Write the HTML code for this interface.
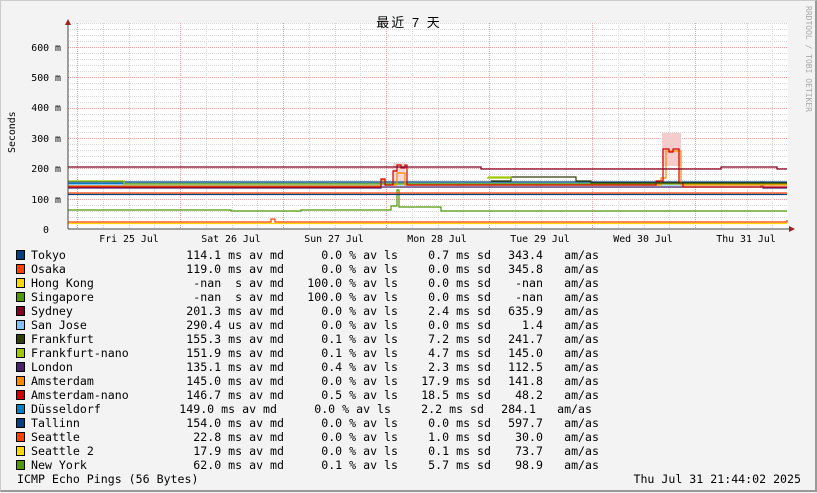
<!DOCTYPE html>
<html><head><meta charset="utf-8"><style>
body{margin:0;width:817px;height:492px;overflow:hidden;background:#f3f3f3}
#w{position:relative;width:817px;height:492px;background:#f3f3f3;box-sizing:border-box;border-top:1px solid #ccc;border-left:1px solid #ccc;border-right:2px solid #999;border-bottom:2px solid #999}
svg{position:absolute;left:0;top:0}
.m{font-family:"DejaVu Sans Mono","Liberation Mono",monospace;font-size:9.9px;fill:#000}
.l{font-family:"DejaVu Sans Mono","Liberation Mono",monospace;font-size:11.6px;fill:#000}
.r{text-anchor:end}
</style></head><body><div id="w">
<svg id="s" width="817" height="492" viewBox="0 0 817 492" xmlns="http://www.w3.org/2000/svg">
<rect x="67" y="22" width="720" height="206" fill="#fff"/>
<g id="grid"></g>
<text x="408" y="26" text-anchor="middle" font-family="'Liberation Sans','Noto Sans CJK SC',sans-serif" font-size="13" letter-spacing="2" fill="#000">最近 7 天</text>
<text transform="translate(805,5) rotate(90)" font-family="'DejaVu Sans Mono',monospace" font-size="8" fill="#aaa">RRDTOOL / TOBI OETIKER</text>
<text transform="translate(14,152) rotate(-90)" class="m" font-size="10.5">Seconds</text>
<text x="60" y="50" class="m r">600 m</text><text x="60" y="80" class="m r">500 m</text><text x="60" y="110" class="m r">400 m</text><text x="60" y="141" class="m r">300 m</text><text x="60" y="171" class="m r">200 m</text><text x="60" y="202" class="m r">100 m</text><text x="48" y="232" class="m r">0</text>
<text x="128" y="241" class="m" text-anchor="middle">Fri 25 Jul</text><text x="230" y="241" class="m" text-anchor="middle">Sat 26 Jul</text><text x="333" y="241" class="m" text-anchor="middle">Sun 27 Jul</text><text x="436" y="241" class="m" text-anchor="middle">Mon 28 Jul</text><text x="539" y="241" class="m" text-anchor="middle">Tue 29 Jul</text><text x="642" y="241" class="m" text-anchor="middle">Wed 30 Jul</text><text x="745" y="241" class="m" text-anchor="middle">Thu 31 Jul</text>
<g fill="none" stroke-width="1.2">
<path d="M392 162 L404 162 L404 180 L392 180 Z" fill="#f4d8d8" stroke="none"/>
<path d="M661 132 L680 132 L680 165 L661 165Z" fill="#f4cccc" stroke="none"/>
<path d="M67 222.5H786" stroke="#ffd700"/>
<path d="M67 221H270V218H274V221H786V219" stroke="#ff4000"/>
<path d="M67 209H230V210H300V209H390V205H396V189H398V206H440V210H786" stroke="#4e9a06"/>
<path d="M67 192H786" stroke="#ff4000"/>
<path d="M67 193.5H786" stroke="#004080"/>
<path d="M67 187H380V186H760V181H762V187H786" stroke="#4a2070"/>
<path d="M67 184H786" stroke="#80c0ff"/>
<path d="M67 181H786" stroke="#004080"/>
<path d="M67 182.5H786" stroke="#0080c0"/>
<path d="M67 180H123V183H786" stroke="#a0c800"/>
<path d="M67 185H380V179H384V184H396V172H404V184H660V177H665V150H680V184H786" stroke="#ff8800"/>
<path d="M67 186H380V178H384V184H392V170H396V164H400V167H404V164H406V184H655V180H662V148H668V151H672V148H678V182H682V186H786" stroke="#cc0000"/>
<path d="M490 180H510V176H575V180H590V182H786" stroke="#2f3f0a"/>
<path d="M487 176H510V177H486" stroke="#a0c800"/>
<path d="M67 166H480V168H720V166H776V168H786" stroke="#7f0020"/>
</g>
<path d="M67 228H790" stroke="#444" stroke-width="1"/>
<path d="M67 228V22" stroke="#444" stroke-width="1"/>
<path d="M64 24L67 18L70 24Z" fill="#a02020"/>
<path d="M788 225L794 228L788 231Z" fill="#a02020"/>
<g id="leg"></g>
<text x="16" y="482" class="l">ICMP Echo Pings (56 Bytes)</text>
<text x="800" y="482" class="l r">Thu Jul 31 21:44:02 2025</text>
</svg></div>
<script>
var NS="http://www.w3.org/2000/svg",g=document.getElementById("grid");
function ln(x1,y1,x2,y2,c){var l=document.createElementNS(NS,"line");l.setAttribute("x1",x1);l.setAttribute("y1",y1);l.setAttribute("x2",x2);l.setAttribute("y2",y2);l.setAttribute("stroke",c);l.setAttribute("stroke-width","1");l.setAttribute("stroke-dasharray","1,1");g.appendChild(l);}
for(var i=1;i<=34;i++){var y=Math.round(228-i*6.066)+0.5;ln(67,y,787,y,i%5==0?"#f0a0a0":"#d8d8d8");}
for(var k=-1;k<30;k++){var x=Math.round(76+k*25.75)+0.5;if(x<68||x>787)continue;ln(x,22,x,228,k%4==0?"#f0a0a0":"#d8d8d8");}
var rows=[["#004080","Tokyo","114.1 ms av md","0.0 % av ls","0.7 ms sd","343.4"],
["#ff4000","Osaka","119.0 ms av md","0.0 % av ls","0.0 ms sd","345.8"],
["#ffd700","Hong Kong","-nan  s av md","100.0 % av ls","0.0 ms sd","-nan"],
["#4e9a06","Singapore","-nan  s av md","100.0 % av ls","0.0 ms sd","-nan"],
["#7f0020","Sydney","201.3 ms av md","0.0 % av ls","2.4 ms sd","635.9"],
["#80c0ff","San Jose","290.4 us av md","0.0 % av ls","0.0 ms sd","1.4"],
["#2f3f0a","Frankfurt","155.3 ms av md","0.1 % av ls","7.2 ms sd","241.7"],
["#a0c800","Frankfurt-nano","151.9 ms av md","0.1 % av ls","4.7 ms sd","145.0"],
["#4a2070","London","135.1 ms av md","0.4 % av ls","2.3 ms sd","112.5"],
["#ff8800","Amsterdam","145.0 ms av md","0.0 % av ls","17.9 ms sd","141.8"],
["#cc0000","Amsterdam-nano","146.7 ms av md","0.5 % av ls","18.5 ms sd","48.2"],
["#0080c0","Düsseldorf","149.0 ms av md","0.0 % av ls","2.2 ms sd","284.1"],
["#004080","Tallinn","154.0 ms av md","0.0 % av ls","0.0 ms sd","597.7"],
["#ff4000","Seattle","22.8 ms av md","0.0 % av ls","1.0 ms sd","30.0"],
["#ffd700","Seattle 2","17.9 ms av md","0.0 % av ls","0.1 ms sd","73.7"],
["#4e9a06","New York","62.0 ms av md","0.1 % av ls","5.7 ms sd","98.9"]];
var L=document.getElementById("leg");
function tx(x,y,s,a){var t=document.createElementNS(NS,"text");t.setAttribute("x",x);t.setAttribute("y",y);t.setAttribute("class","l");t.style.whiteSpace="pre";if(a)t.setAttribute("text-anchor","end");t.textContent=s;L.appendChild(t);}
rows.forEach(function(r,i){var yc=254+i*14,y=yc+4,d=(i==11)?7:0;
var q=document.createElementNS(NS,"rect");q.setAttribute("x",15.5);q.setAttribute("y",yc-4.5);q.setAttribute("width",8);q.setAttribute("height",9);q.setAttribute("fill",r[0]);q.setAttribute("stroke","#000");q.setAttribute("stroke-width","1");L.appendChild(q);
tx(30,y,r[1]);tx(283-d,y,r[2],1);tx(397-d,y,r[3],1);tx(490-d,y,r[4],1);tx(542-d,y,r[5],1);tx(598-d,y,"am/as",1);});
</script>
</body></html>
